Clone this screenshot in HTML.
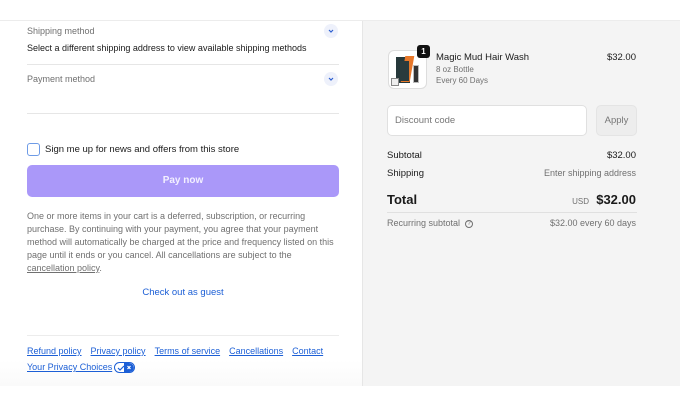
<!DOCTYPE html>
<html><head><style>
*{margin:0;padding:0;box-sizing:border-box}
body{width:680px;height:408px;background:#fff;font-family:"Liberation Sans",Arial,sans-serif;position:relative;overflow:hidden;color:#1a1a1a}
.a{position:absolute;white-space:nowrap}
.g{color:#707070}
.chev{position:absolute;width:14px;height:14px;border-radius:50%;background:#eef1fb}
.chev svg{position:absolute;left:3px;top:3px}
a{color:#1c5fd6;text-decoration:underline}
.f a{margin-right:9px}
</style></head><body>
<div class="a" style="left:0;top:20px;width:680px;height:1px;background:#ececec"></div>
<div class="a" style="left:362px;top:21px;width:318px;height:365px;background:#f4f4f4;border-left:1px solid #e6e6e6"></div>
<div class="a" style="left:0;top:360px;width:362px;height:26px;background:linear-gradient(#fff,#fafafa)"></div>

<div class="a g" style="left:27px;top:26px;font-size:9px">Shipping method</div>
<div class="chev" style="left:324px;top:24px"><svg width="8" height="8" viewBox="0 0 8 8"><path d="M2 3l2 2 2-2" stroke="#2d5fd0" stroke-width="1.2" fill="none"/></svg></div>
<div class="a" style="left:27px;top:43px;font-size:9px">Select a different shipping address to view available shipping methods</div>
<div class="a" style="left:27px;top:64px;width:312px;height:1px;background:#e6e6e6"></div>
<div class="a g" style="left:27px;top:74px;font-size:9px">Payment method</div>
<div class="chev" style="left:324px;top:72px"><svg width="8" height="8" viewBox="0 0 8 8"><path d="M2 3l2 2 2-2" stroke="#2d5fd0" stroke-width="1.2" fill="none"/></svg></div>
<div class="a" style="left:27px;top:113px;width:312px;height:1px;background:#e6e6e6"></div>

<div class="a" style="left:27px;top:143px;width:13px;height:13px;border:1.5px solid #6e9be6;border-radius:3px;background:#fff"></div>
<div class="a" style="left:45px;top:144px;font-size:9.5px">Sign me up for news and offers from this store</div>
<div class="a" style="left:27px;top:165px;width:312px;height:32px;background:#aa98f9;border-radius:5px;color:#f3f0ff;font-size:10px;font-weight:bold;text-align:center;line-height:32px">Pay now</div>

<div class="a g" style="left:27px;top:210px;font-size:9px;line-height:13px;white-space:normal;width:312px">One or more items in your cart is a deferred, subscription, or recurring purchase. By continuing with your payment, you agree that your payment method will automatically be charged at the price and frequency listed on this page until it ends or you cancel. All cancellations are subject to the <span style="text-decoration:underline">cancellation policy</span>.</div>
<div class="a" style="left:27px;top:287px;width:312px;text-align:center;font-size:9.5px;color:#1c5fd6">Check out as guest</div>
<div class="a" style="left:27px;top:335px;width:312px;height:1px;background:#ececec"></div>
<div class="a f" style="left:27px;top:346px;font-size:9px"><a>Refund policy</a><a>Privacy policy</a><a>Terms of service</a><a>Cancellations</a><a>Contact</a></div>
<div class="a" style="left:27px;top:362px;font-size:9px"><a>Your Privacy Choices</a></div>
<div class="a" style="left:114px;top:362px;width:21px;height:11px;border:1px solid #1c5fd6;border-radius:6px;background:#fff;overflow:hidden"><div style="position:absolute;right:0;top:0;width:10px;height:11px;background:#1c5fd6;border-radius:0 5px 5px 0"></div><svg style="position:absolute;left:0;top:0" width="20" height="10" viewBox="0 0 20 10"><path d="M3 5l2 2 4-4" stroke="#1c5fd6" stroke-width="1.2" fill="none"/><path d="M12.5 3l3 3M15.5 3l-3 3" stroke="#fff" stroke-width="1.2"/></svg></div>

<div class="a" style="left:388px;top:50px;width:39px;height:39px;border:1px solid #ddd;border-radius:6px;background:#fff;overflow:hidden">
<div style="position:absolute;left:7px;top:6px;width:14px;height:26px;background:#26383a"></div>
<div style="position:absolute;left:14px;top:5px;width:9px;height:26px;background:#e8782a;transform:skewX(-10deg)"></div>
<div style="position:absolute;left:11px;top:10px;width:9px;height:20px;background:#2a3b3d"></div>
<div style="position:absolute;left:24px;top:14px;width:6px;height:18px;background:#333;border:1px solid #bbb"></div>
<div style="position:absolute;left:2px;top:27px;width:8px;height:8px;border:1px solid #888;background:#eee"></div>
</div>
<div class="a" style="left:417px;top:45px;width:13px;height:13px;border-radius:3px;background:#111;color:#fff;font-size:8px;font-weight:bold;text-align:center;line-height:13px">1</div>
<div class="a" style="left:436px;top:52px;font-size:9.5px">Magic Mud Hair Wash</div>
<div class="a g" style="left:436px;top:65px;font-size:8px">8 oz Bottle</div>
<div class="a g" style="left:436px;top:76px;font-size:8px">Every 60 Days</div>
<div class="a" style="right:44px;top:52px;font-size:9.5px">$32.00</div>

<div class="a" style="left:387px;top:105px;width:200px;height:31px;background:#fff;border:1px solid #e0e0e0;border-radius:5px;font-size:9.5px;color:#777;padding-left:7px;line-height:29px">Discount code</div>
<div class="a" style="left:596px;top:105px;width:41px;height:31px;background:#ededed;border:1px solid #e4e4e4;border-radius:5px;font-size:9.5px;color:#777;text-align:center;line-height:29px">Apply</div>

<div class="a" style="left:387px;top:150px;font-size:9.5px">Subtotal</div>
<div class="a" style="right:44px;top:150px;font-size:9.5px">$32.00</div>
<div class="a" style="left:387px;top:168px;font-size:9.5px">Shipping</div>
<div class="a g" style="right:44px;top:168px;font-size:9px">Enter shipping address</div>
<div class="a" style="left:387px;top:192px;font-size:13px;font-weight:bold">Total</div>
<div class="a" style="right:44px;top:192px;font-size:13px;font-weight:bold"><span style="font-size:8px;font-weight:normal;color:#707070">USD</span>&nbsp; $32.00</div>
<div class="a" style="left:387px;top:212px;width:250px;height:1px;background:#e0e0e0"></div>
<div class="a g" style="left:387px;top:218px;font-size:9px">Recurring subtotal &nbsp;<span style="display:inline-block;width:8px;height:8px;border:1px solid #707070;border-radius:50%;font-size:6px;line-height:7px;text-align:center;vertical-align:middle">?</span></div>
<div class="a g" style="right:44px;top:218px;font-size:9px">$32.00 every 60 days</div>
</body></html>
